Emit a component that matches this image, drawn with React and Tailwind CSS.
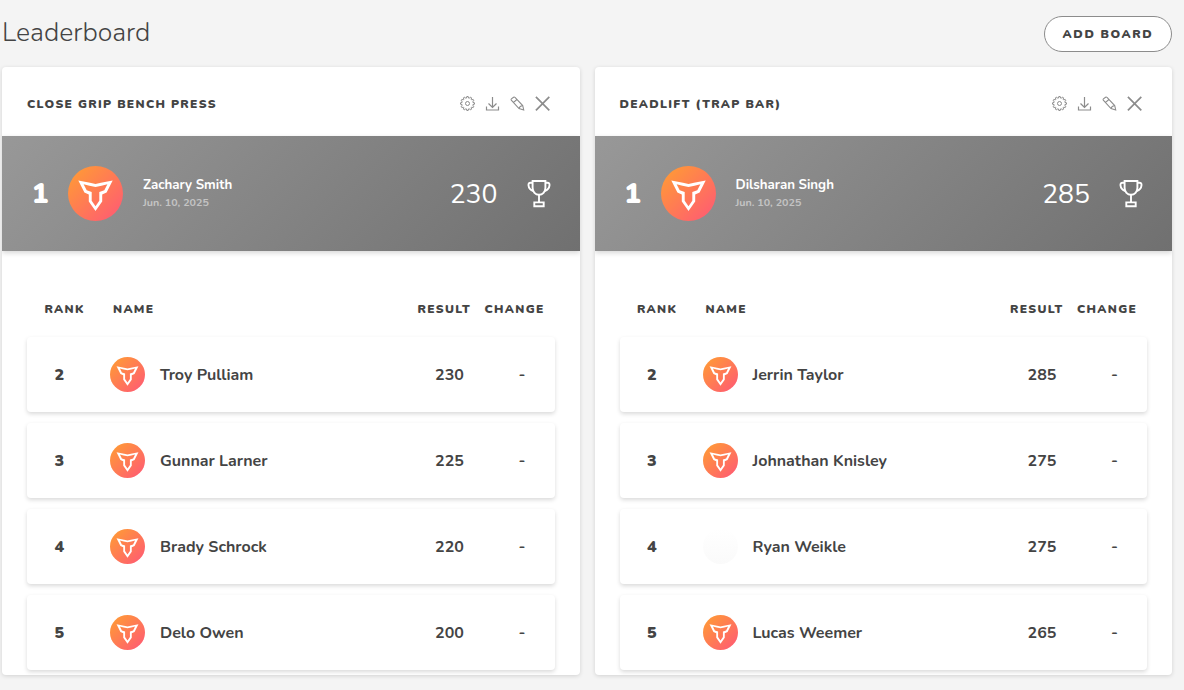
import React from 'react';

const boards = [
  {
    title: 'Close Grip Bench Press',
    leader: { name: 'Zachary Smith', date: 'Jun. 10, 2025', result: 230 },
    rows: [
      { rank: 2, name: 'Troy Pulliam', result: 230 },
      { rank: 3, name: 'Gunnar Larner', result: 225 },
      { rank: 4, name: 'Brady Schrock', result: 220 },
      { rank: 5, name: 'Delo Owen', result: 200 },
    ],
  },
  {
    title: 'Deadlift (Trap Bar)',
    leader: { name: 'Dilsharan Singh', date: 'Jun. 10, 2025', result: 285 },
    rows: [
      { rank: 2, name: 'Jerrin Taylor', result: 285 },
      { rank: 3, name: 'Johnathan Knisley', result: 275 },
      { rank: 4, name: 'Ryan Weikle', result: 275, blank: true },
      { rank: 5, name: 'Lucas Weemer', result: 265 },
    ],
  },
];

// 12-tooth cog outline around (8, 8)
const cogPath = () => {
  const pts = [];
  for (let i = 0; i < 12; i++) {
    [[-10, 5.6], [-6, 7], [6, 7], [10, 5.6]].forEach(([offset, r]) => {
      const a = ((i * 30 + offset) * Math.PI) / 180;
      pts.push(`${(8 + r * Math.sin(a)).toFixed(2)} ${(8 - r * Math.cos(a)).toFixed(2)}`);
    });
  }
  return `M${pts.join('L')}Z`;
};

const Icon = ({ children }) => (
  <svg viewBox="0 0 16 16" className="h-4 w-4" fill="none" stroke="currentColor">
    {children}
  </svg>
);

const Trophy = () => (
  <svg viewBox="0 0 24 29" className="h-[29px] w-6" fill="none" stroke="#fff" strokeWidth="1.9">
    <path d="M5.6 2h12.8v6.7c0 4.2-2.8 7.1-6.4 7.1s-6.4-2.9-6.4-7.1z" />
    <path d="M5.6 3.7H3.6c-1.6 0-2.3 1-2.1 2.7.3 2.9 2 4.8 4.9 5.6M18.4 3.7h2c1.6 0 2.3 1 2.1 2.7-.3 2.900-2 4.800-4.900 5.600M12 15.800v6.600M7.300 23.400h9.400v3.800H7.300z" />
  </svg>
);

const Avatar = ({ id, className }) => (
  <svg viewBox="0 0 55 55" className={className}>
    <defs>
      <linearGradient id={id} x1="0.1" y1="0.1" x2="0.9" y2="0.9">
        <stop offset="0" stopColor="#ff9838" />
        <stop offset="1" stopColor="#ff5e70" />
      </linearGradient>
    </defs>
    <circle cx="27.5" cy="27.5" r="27.5" fill={`url(#${id})`} />
    <path
      d="M10.3 14.5L22 16.8L27.5 17.9L33 16.8L44.7 14.5L38.6 26.6L34.2 28.600V35.600L27.5 45L20.8 35.600V28.600L16.4 26.600ZM15.600 18.200L18.700 24.200L23.700 25.900V34.700L27.5 40.200L31.300 34.700V25.900L36.300 24.200L39.400 18.200L33.500 19.700L27.500 21L21.500 19.700Z"
      fill="#fff"
      fillRule="evenodd"
    />
  </svg>
);

const Board = ({ board, index }) => (
  <section className="h-[608px] overflow-hidden rounded bg-white shadow-[0_1px_4px_rgba(0,0,0,0.14)]">
    <header className="flex h-[69px] items-center justify-between pt-1 pr-[29px] pl-[25px]">
      <h2 className="text-xs font-black tracking-[1.3px] uppercase">{board.title}</h2>
      <div className="flex gap-[9px] text-[#8c8c8c]">
        <Icon>
          <path d={cogPath()} transform="translate(-.5 -.5)" />
          <circle cx="7.5" cy="7.5" r="2" />
        </Icon>
        <Icon>
          <path d="M7.500 1v10.500M3.500 7.500l4 4 4-4M1.500 10.500V14h12v-3.500" strokeWidth="1.200" />
        </Icon>
        <Icon>
          <path
            d="M1.300 4.100Q.8 3.400 1.400 2.800L3.600 1.200Q4.300.7 5 1.300L12.700 9.500L13.700 14L9 12.500ZM3.500 6.500L7 3.400M9 12.500L10.200 10.500L12.700 9.500"
            strokeWidth="1.100"
          />
        </Icon>
        <Icon>
          <path d="M.9.9l13.400 13.400M14.300.9L.9 14.300" strokeWidth="1.700" />
        </Icon>
      </div>
    </header>

    <div className="flex h-[115px] items-center bg-[linear-gradient(135deg,#989898,#707070)] pr-[29px] text-white shadow-[0_2px_5px_rgba(0,0,0,0.16)]">
      <span className="w-[66px] pt-[3px] pl-[30px] text-[27px] font-black">1</span>
      <Avatar id={`leader-${index}`} className="h-[55px] w-[55px]" />
      <div className="ml-[20px] flex-1">
        <p className="text-[13.3px] leading-[18px] font-bold">{board.leader.name}</p>
        <p className="text-[10.7px] leading-[18px] font-bold text-white/50">{board.leader.date}</p>
      </div>
      <span className="mr-[29px] pt-[3px] text-[26.6px] font-normal">{board.leader.result}</span>
      <Trophy />
    </div>

    <div className="px-[25px] pt-[48px]">
      <div className="flex h-[20px] items-center text-xs font-black tracking-[1.3px] uppercase">
        <span className="w-[86px] pl-[17.5px]">Rank</span>
        <span className="flex-1">Name</span>
        <span className="w-[67px]">Result</span>
        <span className="w-[70px]">Change</span>
      </div>
      <ul className="mt-[18px] flex flex-col gap-[11px]">
        {board.rows.map((row) => (
          <li
            key={row.rank}
            className="flex h-[75px] items-center rounded text-base font-bold shadow-[0_2px_4px_rgba(0,0,0,0.15)]"
          >
            <span className="w-[83px] pl-[27.5px] font-black">{row.rank}</span>
            {row.blank ? (
              <div className="h-[35px] w-[35px] rounded-full bg-linear-to-b from-white to-[#fafafa]" />
            ) : (
              <Avatar id={`avatar-${index}-${row.rank}`} className="h-[35px] w-[35px]" />
            )}
            <span className="ml-[15px] flex-1">{row.name}</span>
            <span className="w-[60px] text-center">{row.result}</span>
            <span className="mr-[29px] ml-[39px] w-[7px] text-center">-</span>
          </li>
        ))}
      </ul>
    </div>
  </section>
);

const App = () => (
  <main className="h-[690px] overflow-hidden bg-[#f4f4f4] pr-3 pl-0.5 font-['Nunito','Lato',sans-serif] text-[#444]">
    <div className="flex h-[67px] items-start justify-between pt-4">
      <h1 className="text-[26.6px] leading-[32px] font-light">Leaderboard</h1>
      <button
        type="button"
        className="h-9 w-32 rounded-full border border-[#8c8c8c] bg-white text-xs font-black tracking-[1.6px] uppercase"
      >
        Add Board
      </button>
    </div>
    <div className="grid grid-cols-2 gap-[15px]">
      {boards.map((board, i) => (
        <Board key={board.title} board={board} index={i} />
      ))}
    </div>
  </main>
);

export default App;
